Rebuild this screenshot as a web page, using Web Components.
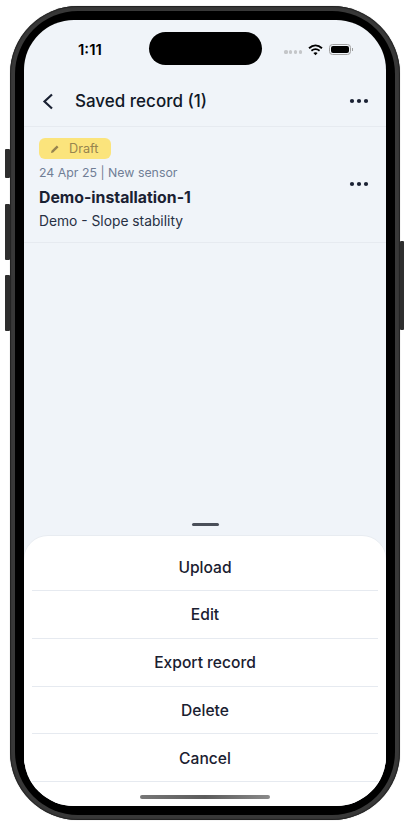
<!DOCTYPE html>
<html><head><meta charset="utf-8">
<style>
html,body{margin:0;padding:0;background:#fff;}
body{width:410px;height:822px;overflow:hidden;font-family:Inter,"Liberation Sans",sans-serif;}
</style></head>
<body>
<phone-frame>
  <status-bar slot="status"></status-bar>
  <app-header title-text="Saved record (1)"></app-header>
  <record-item></record-item>
  <action-sheet>
    <sheet-row>Upload</sheet-row>
    <sheet-row>Edit</sheet-row>
    <sheet-row>Export record</sheet-row>
    <sheet-row>Delete</sheet-row>
    <sheet-row>Cancel</sheet-row>
  </action-sheet>
</phone-frame>
<script>
function def(name, html){
  customElements.define(name, class extends HTMLElement{
    constructor(){super();this.attachShadow({mode:'open'}).innerHTML=html;}
  });
}
const dots=`<svg width="20" height="6" viewBox="0 0 20 6" fill="#1a2133"><circle cx="3" cy="3" r="2.1"/><circle cx="10" cy="3" r="2.1"/><circle cx="17" cy="3" r="2.1"/></svg>`;
def('phone-frame',`<style>
:host{display:block;box-sizing:border-box;position:relative;width:390px;height:814px;margin:6px 0 0 10px;padding:5px;border-radius:68px;background:#383838;box-shadow:inset 0 0 1px 1px #222,0 0 1px #999;}
.bezel{box-sizing:border-box;height:100%;padding:9px;border-radius:63px;background:#000;}
.screen{position:relative;height:100%;border-radius:50px;overflow:hidden;background:#f0f4f9;display:flex;flex-direction:column;}
.btn{position:absolute;background:#2e2e2e;border-radius:1px;}
.l{left:-5px;width:5px}.r{right:-4px;width:4px;top:235px;height:89px}
.island{position:absolute;left:125px;top:12px;width:113px;height:33px;border-radius:17px;background:#000;}
.home{position:absolute;left:116px;bottom:7px;width:130px;height:4px;border-radius:2px;background:linear-gradient(90deg,#777,#5c5c5c 50%,#8a8a8a);}
</style>
<div class="btn l" style="top:143px;height:29px"></div>
<div class="btn l" style="top:198px;height:56px"></div>
<div class="btn l" style="top:269px;height:56px"></div>
<div class="btn r"></div>
<div class="bezel"><div class="screen">
<slot name="status"></slot><slot></slot>
<div class="island"></div><div class="home"></div>
</div></div>`);
def('status-bar',`<style>
:host{display:flex;align-items:center;height:58px;flex:none;box-sizing:border-box;padding:1px 35px 0 54px;color:#000;}
.t{font:600 15px Inter,sans-serif;}
.sp{flex:1}
.sig{display:flex;gap:1.600px;margin-right:6px;margin-top:5px}
.sig i{width:3.200px;height:3.200px;border-radius:50%;background:#c4c6c9;display:block}
.bat{position:relative;margin-left:6px;width:22px;height:11px;box-sizing:border-box;border:1px solid #a0a0a0;border-radius:3.500px;padding:1px;}
.bat b{display:block;height:100%;background:#000;border-radius:2px}
.bat:after{content:"";position:absolute;right:-3px;top:3px;width:1px;height:3px;background:#a0a0a0}
</style>
<span class="t">1:11</span><span class="sp"></span>
<span class="sig"><i></i><i></i><i></i><i></i></span>
<svg width="15" height="12" viewBox="0 0 15 12"><path d="M1 4.200C5 .6 10 .6 14 4.200" fill="none" stroke="#000" stroke-width="1.900"/><path d="M3.400 6.800C6 4.600 9 4.600 11.600 6.800" fill="none" stroke="#000" stroke-width="1.800"/><path d="M5.400 8.900C6.600 7.900 8.400 7.900 9.600 8.900L7.500 11.200Z" fill="#000"/></svg>
<span class="bat"><b></b></span>`);
def('app-header',`<style>
:host{display:flex;align-items:center;height:49px;flex:none;box-sizing:border-box;padding:0 17px 2px 18px;border-bottom:1px solid #e6eaf0;color:#111827;}
h1{flex:1;margin:0 0 0 21px;font:500 17px Inter,sans-serif;}
svg{display:block}
.more{margin-top:-1px}
</style>
<svg width="12" height="17" viewBox="0 0 12 17"><path d="M10 1.500L2.500 8.500L10 15.500" fill="none" stroke="#1a2133" stroke-width="2.200"/></svg>
<h1>Saved record (1)</h1><div class="more">${dots}</div>`);
def('record-item',`<style>
:host{display:flex;align-items:center;flex:none;box-sizing:border-box;height:116px;padding:11px 17px 0 15px;border-bottom:1px solid #e6eaf0;}
.m{flex:1;display:flex;flex-direction:column;align-items:flex-start;align-self:flex-start}
.badge{display:flex;align-items:center;gap:9px;box-sizing:border-box;height:21px;width:72px;padding-left:11px;border-radius:6px;background:#fbe47c;color:#97844f;font:400 12.700px Inter,sans-serif;}
.d{margin-top:6px;font:400 12.350px/16px Inter,sans-serif;color:#707e96}
.n{margin-top:7px;font:700 15.800px/20px Inter,sans-serif;color:#1a2133}
.s{margin-top:4px;font:400 13.800px/18px Inter,sans-serif;color:#273044}
svg{display:block}
.more{margin-top:-12px}
</style>
<div class="m"><div class="badge"><svg width="10" height="10" viewBox="0 0 10 10"><path d="M1 9L1.500 6.800L6.800 1.500L8.500 3.200L3.200 8.500Z" fill="#97844f"/></svg>Draft</div>
<div class="d">24 Apr 25 | New sensor</div><div class="n">Demo-installation-1</div><div class="s">Demo - Slope stability</div></div>
<div class="more">${dots}</div>`);
def('action-sheet',`<style>
:host{display:flex;flex-direction:column;flex:1;justify-content:flex-end;}
.grab{align-self:center;width:27px;height:3px;border-radius:2px;background:#4a4f59;margin-bottom:10px}
.sheet{box-sizing:border-box;height:270px;background:#fff;border-radius:24px 24px 0 0;box-shadow:0 -1px 0 #e8ecf1;padding:7.200px 8px 0;}
</style><div class="grab"></div><div class="sheet"><slot></slot></div>`);
def('sheet-row',`<style>
:host{display:flex;align-items:center;justify-content:center;box-sizing:border-box;height:47.800px;padding-top:1px;border-bottom:1px solid #e6eaf0;font:500 15.600px Inter,sans-serif;color:#1a2030;}
</style><slot></slot>`);
</script>
</body></html>
